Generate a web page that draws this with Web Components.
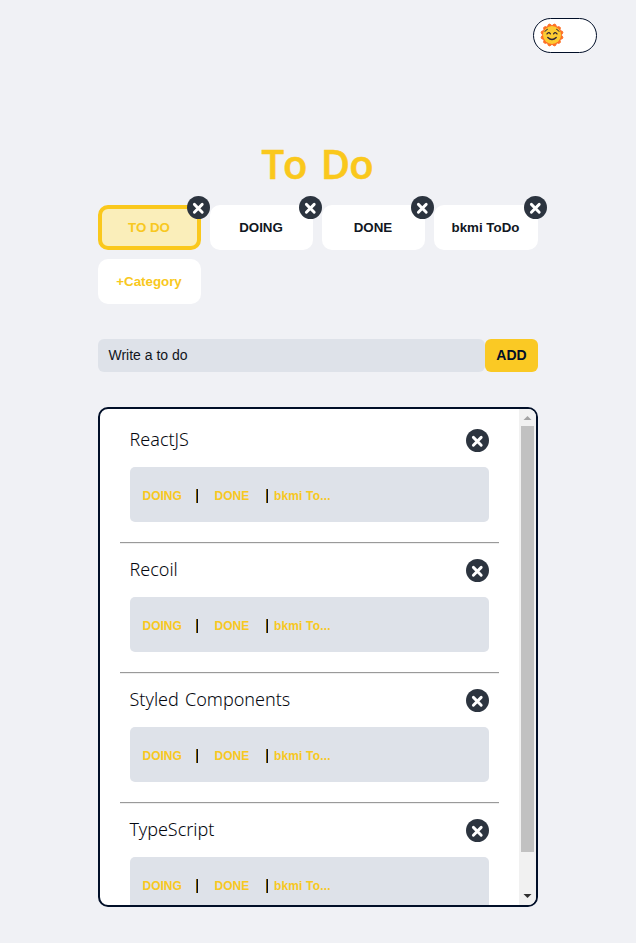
<!DOCTYPE html>
<html lang="en">
<head>
<meta charset="utf-8">
<title>To Do</title>
<style>
body{margin:0;background:#f0f1f5;color:#010f28;font-family:"Liberation Sans",Arial,sans-serif}
</style>
</head>
<body>
<todo-app></todo-app>
<script>
function define(name, html, setup) {
  const tpl = document.createElement('template');
  tpl.innerHTML = html;
  customElements.define(name, class extends HTMLElement {
    constructor() {
      super();
      this.attachShadow({mode: 'open'}).append(tpl.content.cloneNode(true));
    }
    connectedCallback() { if (setup) setup(this); }
  });
}

define('close-button', `
<style>:host{display:block;width:23px;height:23px}svg{display:block}</style>
<svg width="23" height="23" viewBox="0 0 23 23"><circle cx="11.5" cy="11.5" r="11.5" fill="#2c343f"/><path d="M7.4 8.4l7.8 7.8M15.2 8.4l-7.8 7.8" stroke="#fff" stroke-width="2.9" stroke-linecap="round"/></svg>`);

define('theme-toggle', `
<style>
:host{display:flex;align-items:center;box-sizing:border-box;width:64px;height:35px;border:1px solid #010f28;border-radius:18px;background:#fff;padding:0 0 1px 6px}
svg{display:block}
</style>
<svg width="24" height="24" viewBox="0 0 24 24">
<g id="rays" fill="#fd7024" stroke="#fd7024" stroke-linejoin="round"></g>
<circle cx="12" cy="12" r="9" fill="#fccb32"/>
<g fill="none" stroke="#2d2438" stroke-linecap="round"><path d="M7 10.9q1.7-2.3 3.4-.1M13.6 10.8q1.7-2.2 3.4.1" stroke-width="1.3"/><path d="M7.8 14.4q4.2 4 8.4 0" stroke-width="1.4"/><path d="M5 8.4q.8-1.6 2.4-2.1M16.6 6.3q1.6.5 2.4 2.1" stroke-width="1"/></g>
</svg>`, el => {
  const p = document.createElementNS('http://www.w3.org/2000/svg', 'polygon');
  const pts = [];
  for (let i = 0; i < 48; i++) {
    const a = (i * 7.5 + 11.25) * Math.PI / 180;
    const r = i % 4 < 2 ? 11.1 : 9.7;
    pts.push((12 + r * Math.cos(a)).toFixed(2) + ',' + (12 + r * Math.sin(a)).toFixed(2));
  }
  p.setAttribute('points', pts.join(' '));
  el.shadowRoot.getElementById('rays').append(p);
});

define('category-tab', `
<style>
:host{display:flex;position:relative;align-items:center;justify-content:center;box-sizing:border-box;height:45px;padding:0 1px 1px 0;border-radius:10px;background:#fff;font-weight:700;font-size:13.333px;white-space:nowrap;color:#111722}
:host([active]){border:4px solid #fac81c;background:#faeeba;color:#f8c821}
:host([add]){color:#f8c821}
close-button{position:absolute;right:-9px;top:-9px}
:host([active]) close-button{right:-13px;top:-13px}
:host([add]) close-button{display:none}
</style><span><slot></slot></span><close-button></close-button>`);

define('todo-form', `
<style>
:host{display:flex;height:33px}
.field{flex:1;display:flex;align-items:center;padding:0 0 2px 10.5px;border-radius:6px;background:#dee2e9;font-size:14px;color:#12151c}
.add{display:flex;align-items:center;justify-content:center;box-sizing:border-box;width:53px;padding-bottom:1px;border-radius:6px;background:#fac924;font-weight:700;font-size:14px}
</style><div class="field">Write a to do</div><div class="add"><span>ADD</span></div>`);

define('todo-item', `
<style>
:host{display:block;height:130px;margin:0 20px;box-sizing:border-box}
header{display:flex;justify-content:space-between;align-items:center;height:23px;padding:20px 10px 0 9.5px}
.name{font:300 18px/23px "Noto Sans",sans-serif;color:#050810;word-spacing:1.5px;padding-bottom:2px}
.moves{display:flex;align-items:center;box-sizing:border-box;height:55px;margin:15px 10px 20px 10px;padding-top:2px;border-radius:5px;background:#dee2e9;font-weight:700;font-size:12px;color:#f8c821}
.moves span{display:block;box-sizing:border-box;white-space:nowrap}
.a{width:66px;padding-left:12.5px}.b{width:68px;padding-left:16.5px}.c{padding-left:6px;letter-spacing:.15px}
i{display:block;width:2px;height:14px;background:linear-gradient(90deg,#8c6000 50%,#010f28 50%)}
.rule{height:1px;background:#9a9a9a;border-bottom:1px solid #eee}
</style>
<header><span class="name"><slot></slot></span><close-button></close-button></header>
<div class="moves"><span class="a">DOING</span><i></i><span class="b">DONE</span><i></i><span class="c">bkmi To...</span></div>
<div class="rule"></div>`);

define('scroll-bar', `
<style>
:host{display:flex;flex:none;flex-direction:column;align-items:center;justify-content:space-between;width:17px;height:496px;background:#f1f1f1}
.track{flex:1;width:13px}.thumb{height:426px;background:#c1c1c1}svg{display:block}
</style>
<svg width="17" height="17"><path d="M4.5 11h8l-4-4z" fill="#a3a3a3"/></svg>
<div class="track"><div class="thumb"></div></div>
<svg width="17" height="17"><path d="M4.5 6h8l-4 4z" fill="#303030"/></svg>`);

define('todo-list', `
<style>
:host{display:flex;box-sizing:border-box;height:500px;border:2px solid #010f28;border-radius:10px;background:#fff;overflow:hidden}
.items{flex:1;height:496px;overflow:hidden}
</style><div class="items"><slot></slot></div><scroll-bar></scroll-bar>`);

define('todo-app', `
<style>
:host{display:flex;flex-direction:column;width:636px;height:943px;overflow:hidden}
.top{display:flex;justify-content:flex-end;padding:18px 39px 0 0}
main{width:440px;margin:0 auto}
h1{margin:81px 0 11px;height:60px;padding-right:2px;font:600 40px/60px "Open Sans",sans-serif;color:#fac81c;text-align:center;letter-spacing:-1px;word-spacing:5px;-webkit-text-stroke:.6px #fac81c}
nav{display:grid;grid-template-columns:103px 103px 103px 104px;gap:9px;margin-bottom:35px}
todo-list{margin-top:35px}
</style>
<div class="top"><theme-toggle></theme-toggle></div>
<main>
<h1>To Do</h1>
<nav><category-tab active>TO DO</category-tab><category-tab>DOING</category-tab><category-tab>DONE</category-tab><category-tab>bkmi ToDo</category-tab><category-tab add>+Category</category-tab></nav>
<todo-form></todo-form>
<todo-list><todo-item>ReactJS</todo-item><todo-item>Recoil</todo-item><todo-item>Styled Components</todo-item><todo-item>TypeScript</todo-item></todo-list>
</main>`);
</script>
</body>
</html>
